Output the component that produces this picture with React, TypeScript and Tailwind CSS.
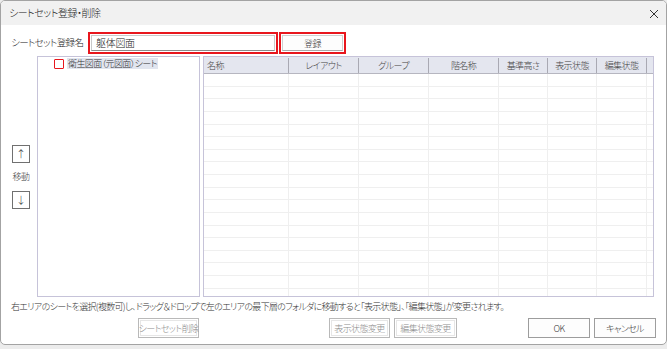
import React from "react";

const FONT = "[font-family:'Noto_Sans_CJK_JP','Noto_Sans',sans-serif] [font-feature-settings:'palt'] font-light";

const cols = [
  { label: "名称", w: "w-[85px]", align: "justify-start pl-[3px]" },
  { label: "レイアウト", w: "w-[70px]", align: "justify-center" },
  { label: "グループ", w: "w-[70px]", align: "justify-center" },
  { label: "階名称", w: "w-[70px]", align: "justify-center" },
  { label: "基準高さ", w: "w-[49px]", align: "justify-center" },
  { label: "表示状態", w: "w-[49px]", align: "justify-center" },
  { label: "編集状態", w: "w-[50px]", align: "justify-center" },
];

const TXT = "text-[9px] tracking-[-0.6px] leading-none whitespace-nowrap";

function DisabledBtn({ label, w, className = "" }: { label: string; w: string; className?: string }) {
  return (
    <div className={`${w} h-[20px] border border-[#b9b9b9] bg-white flex items-center justify-center p-[1px] ${className}`}>
      <div className={`w-full h-full border border-[#e6e6e6] flex items-center justify-center text-[#8c8c8c] ${TXT}`}>
        {label}
      </div>
    </div>
  );
}

function Btn({ label, w, className = "" }: { label: string; w: string; className?: string }) {
  return (
    <div className={`${w} h-[20px] border border-[#9d9d9d] bg-[#fdfdfd] flex items-center justify-center text-[#333] ${TXT} ${className}`}>
      {label}
    </div>
  );
}

export default function App() {
  const rows = Array.from({ length: 18 });
  return (
    <div className={`w-[667px] h-[349px] bg-[#ececec] overflow-hidden ${FONT}`}>
      <div className="w-[667px] h-[345px] border border-[#a3a3a3] rounded-[5px] bg-white flex flex-col overflow-hidden">
        {/* title bar */}
        <div className="h-[24px] bg-[#f1f1f1] flex items-center justify-between pl-[8px] pr-[7px] shrink-0">
          <span className="text-[10px] tracking-[-0.5px] text-[#222] leading-none whitespace-nowrap">シートセット登録・削除</span>
          <svg width="10" height="10" viewBox="0 0 10 10" className="mt-[1px]">
            <path d="M1 1 L9 9 M9 1 L1 9" stroke="#333" strokeWidth="1" />
          </svg>
        </div>

        {/* row 1 */}
        <div className="flex items-center pl-[10px] mt-[7px] h-[22px] shrink-0">
          <span className={`w-[77px] text-[#222] text-[9.5px] tracking-[-0.6px] leading-none whitespace-nowrap`}>シートセット登録名</span>
          <div className="w-[190px] h-[22px] border-2 border-[#e8161d] p-[1px]">
            <div className="w-full h-full border border-[#c9c9c9] border-b-[#8a8a8a] bg-white flex items-center pl-[4px] text-[10px] tracking-[-0.3px] text-[#222] leading-none whitespace-nowrap">
              躯体図面
            </div>
          </div>
          <div className="ml-[1px] w-[67px] h-[22px] border-2 border-[#e8161d] p-[1px]">
            <div className={`w-full h-full border border-[#cfcfcf] border-b-[#a9a9a9] bg-[#fdfdfd] flex items-center justify-center text-[#333] ${TXT}`}>
              登録
            </div>
          </div>
        </div>

        {/* main area */}
        <div className="flex mt-[2px] h-[241px] shrink-0">
          <div className="w-[36px] pl-[11px] flex flex-col justify-center items-start">
            <div className="w-[18px] h-[18px] border border-[#707070] flex items-center justify-center text-[10px] text-[#333] leading-none">↑</div>
            <div className={`mt-[9px] text-[#444] w-[18px] text-center ${TXT}`}>移動</div>
            <div className="mt-[10px] w-[18px] h-[18px] border border-[#707070] flex items-center justify-center text-[10px] text-[#333] leading-none">↓</div>
          </div>

          {/* tree */}
          <div className="w-[163px] h-[241px] border border-[#c6c3d9] bg-white pt-[1px] pl-[16px]">
            <div className="flex items-center h-[11px]">
              <div className="w-[10px] h-[10px] border-[1.5px] border-[#e8161d] rounded-[1px] bg-white" />
              <span className={`ml-[3px] bg-[#e1e5ef] text-[#333] px-[1px] h-[11px] flex items-center ${TXT}`}>衛生図面（元図面）シート</span>
            </div>
          </div>

          {/* table */}
          <div className="ml-[3px] w-[451px] h-[241px] border border-[#c6c3d9] bg-white flex flex-col overflow-hidden">
            <div className="flex h-[17px] shrink-0 bg-[#e4e6ef] border-b border-[#b6b6c0] pt-[1px]">
              {cols.map((c) => (
                <div key={c.label} className={`${c.w} h-full border-r border-[#a9a9b3] flex items-center ${c.align} text-[#444] ${TXT}`}>
                  {c.label}
                </div>
              ))}
              <div className="flex-1 h-full bg-[#e4e6ef]" />
            </div>
            {rows.map((_, i) => (
              <div key={i} className="flex h-[12.625px] shrink-0 border-b border-[#efefef]">
                {cols.map((c) => (
                  <div key={c.label} className={`${c.w} h-full border-r border-[#efefef]`} />
                ))}
                <div className="flex-1" />
              </div>
            ))}
          </div>
        </div>

        {/* hint */}
        <div className="pl-[10px] mt-[4px] h-[12px] text-[9px] tracking-[-0.7px] text-[#333] leading-[12px] whitespace-nowrap">
          右エリアのシートを選択(複数可)し、ドラッグ＆ドロップで左のエリアの最下層のフォルダに移動すると「表示状態」、「編集状態」が変更されます。
        </div>

        {/* buttons */}
        <div className="flex mt-[5px] pl-[137px]">
          <DisabledBtn label="シートセット削除" w="w-[61px]" />
          <DisabledBtn label="表示状態変更" w="w-[61px]" className="ml-[130px]" />
          <DisabledBtn label="編集状態変更" w="w-[63px]" className="ml-[4px]" />
          <Btn label="OK" w="w-[62px]" className="ml-[71px]" />
          <Btn label="キャンセル" w="w-[62px]" className="ml-[4px]" />
        </div>
      </div>
    </div>
  );
}
